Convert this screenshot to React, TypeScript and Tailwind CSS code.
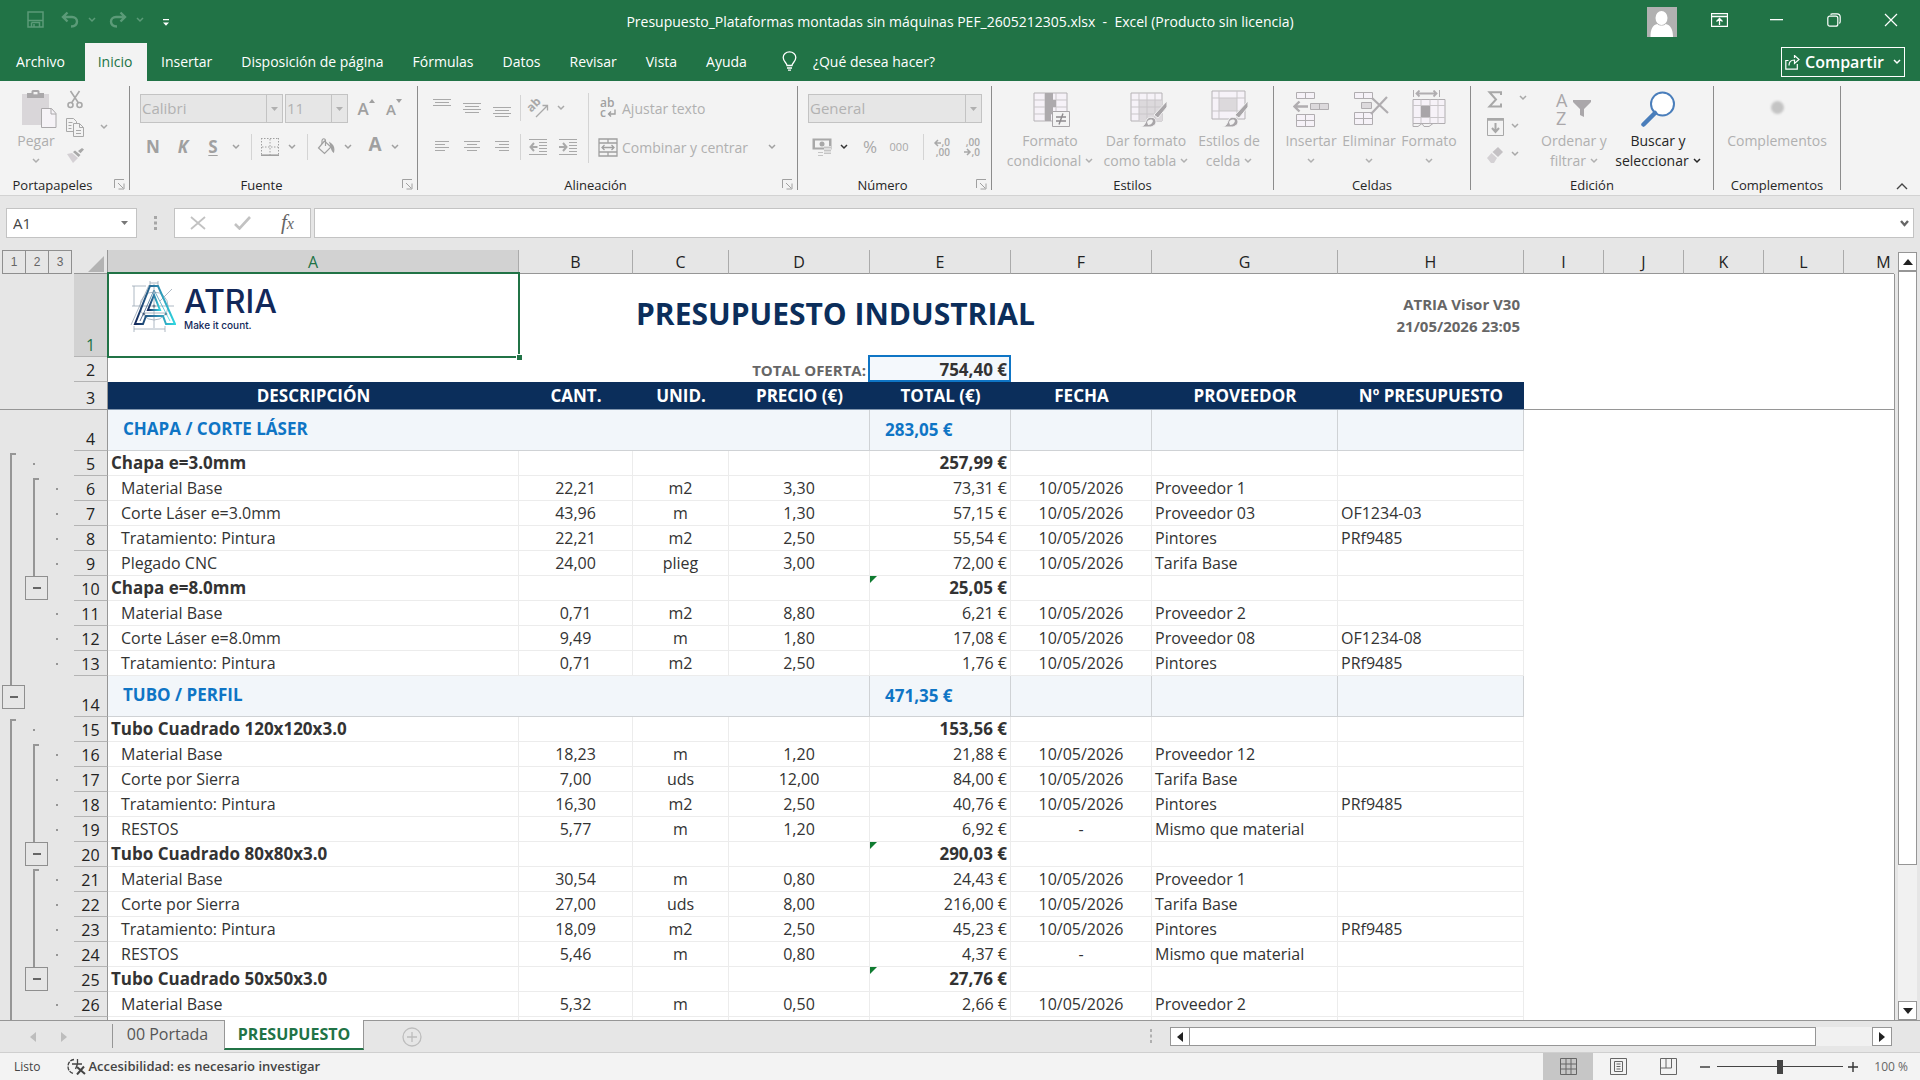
import React, { useState } from 'react';
import { clsx } from 'clsx';

type Kind = 'section' | 'group' | 'item';

interface SheetRow {
  kind: Kind;
  // one letter per outline level: s = start, l = line, d = dot, b = button, - = nothing
  outline: string;
  cells: string[];
  warn?: boolean;
}

const COLUMNS = [
  { id: 'A', width: 'w-[411px]' },
  { id: 'B', width: 'w-[114px]' },
  { id: 'C', width: 'w-[96px]' },
  { id: 'D', width: 'w-[141px]' },
  { id: 'E', width: 'w-[141px]' },
  { id: 'F', width: 'w-[141px]' },
  { id: 'G', width: 'w-[186px]' },
  { id: 'H', width: 'w-[186px]' },
  { id: 'I', width: 'w-[80px]' },
  { id: 'J', width: 'w-[80px]' },
  { id: 'K', width: 'w-[80px]' },
  { id: 'L', width: 'w-[80px]' },
  { id: 'M', width: 'w-[80px]' },
];

const HEADINGS = ['DESCRIPCIÓN', 'CANT.', 'UNID.', 'PRECIO (€)', 'TOTAL (€)', 'FECHA', 'PROVEEDOR', 'Nº PRESUPUESTO'];

const DATE = '10/05/2026';

const ROWS: SheetRow[] = [
  { kind: 'section', outline: '---', cells: ['CHAPA / CORTE LÁSER', '283,05 €'] },
  { kind: 'group', outline: 'sd-', cells: ['Chapa e=3.0mm', '257,99 €'] },
  { kind: 'item', outline: 'lsd', cells: ['Material Base', '22,21', 'm2', '3,30', '73,31 €', DATE, 'Proveedor 1', ''] },
  { kind: 'item', outline: 'lld', cells: ['Corte Láser e=3.0mm', '43,96', 'm', '1,30', '57,15 €', DATE, 'Proveedor 03', 'OF1234-03'] },
  { kind: 'item', outline: 'lld', cells: ['Tratamiento: Pintura', '22,21', 'm2', '2,50', '55,54 €', DATE, 'Pintores', 'PRf9485'] },
  { kind: 'item', outline: 'lld', cells: ['Plegado CNC', '24,00', 'plieg', '3,00', '72,00 €', DATE, 'Tarifa Base', ''] },
  { kind: 'group', outline: 'lb-', cells: ['Chapa e=8.0mm', '25,05 €'], warn: true },
  { kind: 'item', outline: 'l-d', cells: ['Material Base', '0,71', 'm2', '8,80', '6,21 €', DATE, 'Proveedor 2', ''] },
  { kind: 'item', outline: 'l-d', cells: ['Corte Láser e=8.0mm', '9,49', 'm', '1,80', '17,08 €', DATE, 'Proveedor 08', 'OF1234-08'] },
  { kind: 'item', outline: 'l-d', cells: ['Tratamiento: Pintura', '0,71', 'm2', '2,50', '1,76 €', DATE, 'Pintores', 'PRf9485'] },
  { kind: 'section', outline: 'b--', cells: ['TUBO / PERFIL', '471,35 €'] },
  { kind: 'group', outline: 'sd-', cells: ['Tubo Cuadrado 120x120x3.0', '153,56 €'] },
  { kind: 'item', outline: 'lsd', cells: ['Material Base', '18,23', 'm', '1,20', '21,88 €', DATE, 'Proveedor 12', ''] },
  { kind: 'item', outline: 'lld', cells: ['Corte por Sierra', '7,00', 'uds', '12,00', '84,00 €', DATE, 'Tarifa Base', ''] },
  { kind: 'item', outline: 'lld', cells: ['Tratamiento: Pintura', '16,30', 'm2', '2,50', '40,76 €', DATE, 'Pintores', 'PRf9485'] },
  { kind: 'item', outline: 'lld', cells: ['RESTOS', '5,77', 'm', '1,20', '6,92 €', '-', 'Mismo que material', ''] },
  { kind: 'group', outline: 'lb-', cells: ['Tubo Cuadrado 80x80x3.0', '290,03 €'], warn: true },
  { kind: 'item', outline: 'lsd', cells: ['Material Base', '30,54', 'm', '0,80', '24,43 €', DATE, 'Proveedor 1', ''] },
  { kind: 'item', outline: 'lld', cells: ['Corte por Sierra', '27,00', 'uds', '8,00', '216,00 €', DATE, 'Tarifa Base', ''] },
  { kind: 'item', outline: 'lld', cells: ['Tratamiento: Pintura', '18,09', 'm2', '2,50', '45,23 €', DATE, 'Pintores', 'PRf9485'] },
  { kind: 'item', outline: 'lld', cells: ['RESTOS', '5,46', 'm', '0,80', '4,37 €', '-', 'Mismo que material', ''] },
  { kind: 'group', outline: 'lb-', cells: ['Tubo Cuadrado 50x50x3.0', '27,76 €'], warn: true },
  { kind: 'item', outline: 'l-d', cells: ['Material Base', '5,32', 'm', '0,50', '2,66 €', DATE, 'Proveedor 2', ''] },
  { kind: 'item', outline: 'l--', cells: ['', '', '', '', '', '', '', ''] },
];

const TABS = ['Insertar', 'Disposición de página', 'Fórmulas', 'Datos', 'Revisar', 'Vista', 'Ayuda'];

/* ---------- small pieces ---------- */

const Caret = ({ className = '' }: { className?: string }) => (
  <svg viewBox="0 0 8 6" className={clsx('h-[6px] w-2 shrink-0', className)} fill="none" stroke="currentColor" strokeWidth="1.5">
    <path d="M1 1l3 3 3-3" />
  </svg>
);

const CaretButton = ({ label, className = '' }: { label: string; className?: string }) => (
  <button aria-label={label} className={clsx('flex h-6 w-4 shrink-0 items-center justify-center', className)}>
    <Caret />
  </button>
);

const IconButton = ({ label, className = 'w-[30px]', children }: { label: string; className?: string; children: React.ReactNode }) => (
  <button aria-label={label} className={clsx('flex h-[26px] shrink-0 items-center justify-center', className)}>
    {children}
  </button>
);

const Launcher = ({ label }: { label: string }) => (
  <button aria-label={label} className="mt-1 flex w-6 items-center justify-center pl-1 text-[#a0a0a0]">
    <svg viewBox="0 0 11 11" className="size-[11px]" fill="none" stroke="currentColor">
      <path d="M.5 9V.5H10M4 4l5 5M10 4.5V10H4.500" />
    </svg>
  </button>
);

interface GroupProps {
  title: string;
  width: string;
  launcher?: boolean;
  children: React.ReactNode;
}

const Group = ({ title, width, launcher, children }: GroupProps) => (
  <section className={clsx('flex shrink-0 flex-col border-r border-[#8c8c8c]', width)}>
    <div className="flex h-[88px]">{children}</div>
    <div className="flex h-4 text-[13px] leading-4 text-[#262626]">
      <span className="mt-[3px] flex-1 text-center">{title}</span>
      {launcher && <Launcher label={`Opciones de ${title}`} />}
    </div>
  </section>
);

interface BigButtonProps {
  icon: React.ReactNode;
  lines: string[];
  width: string;
  caret?: boolean;
  className?: string;
}

const BigButton = ({ icon, lines, width, caret = true, className = '' }: BigButtonProps) => (
  <button className={clsx('flex shrink-0 flex-col items-center text-[14px] leading-5 whitespace-nowrap', width, className)}>
    <span className="mb-[3px] flex h-[42px] items-center">{icon}</span>
    <span>{lines[0]}</span>
    <span className="flex h-5 items-center gap-1">
      {lines[1]}
      {caret && <Caret />}
    </span>
  </button>
);

const Combo = ({ label, value, className }: { label: string; value: string; className: string }) => (
  <div className={clsx('flex h-[29px] shrink-0 border border-[#c3c3c3] bg-[#e6e6e6]', className)}>
    <select aria-label={label} className="min-w-0 flex-1 appearance-none bg-transparent px-px text-[15px] text-[#b2b2b2]" defaultValue={value}>
      <option>{value}</option>
    </select>
    <span className="flex w-4 items-center justify-center border-l border-[#c3c3c3]">
      <svg viewBox="0 0 7 4" className="h-1 w-[7px]" fill="#b0b0b0"><path d="M0 0h7L3.500 4z" /></svg>
    </span>
  </div>
);

const Divider = ({ className = 'h-[26px]' }: { className?: string }) => <span className={clsx('w-px shrink-0 bg-[#d4d4d4]', className)} />;

// Horizontal strokes used by the alignment buttons: [x, y, width]
const Lines = ({ rows }: { rows: number[][] }) => (
  <svg viewBox="0 0 18 22" className="h-[22px] w-[18px]" fill="#a9a9a9">
    {rows.map(([x, y, w]) => <rect key={y} x={x} y={y} width={w} height="1" />)}
  </svg>
);

/* ---------- title bar ---------- */

const TitleBar = () => (
  <header className="flex h-[43px] shrink-0 items-center bg-[#217346] text-white">
    <div className="flex flex-1 items-center pb-1 text-[#5b9b78]">
      <IconButton label="Guardar" className="ml-[22px] w-[26px]">
        <svg viewBox="0 0 17 17" className="size-[17px]" fill="none" stroke="currentColor" strokeWidth="1.500">
          <path d="M1 1h15v15H1zM1 9.500h15" />
          <path d="M4.500 11.500h8V16M4.500 11.500V16M7 13v3" />
        </svg>
      </IconButton>
      <IconButton label="Deshacer" className="ml-2 w-7">
        <svg viewBox="0 0 18 17" className="h-[17px] w-[18px]" fill="none" stroke="currentColor" strokeWidth="2.400">
          <path d="M6.500 1.500L2 6l4.500 4.500M2.500 6H11c3 0 5 2 5 4.600C16 13.500 14 15.500 10 15.500" />
        </svg>
      </IconButton>
      <CaretButton label="Acciones para deshacer" />
      <IconButton label="Rehacer" className="ml-1 w-7">
        <svg viewBox="0 0 18 17" className="h-[17px] w-[18px]" fill="none" stroke="currentColor" strokeWidth="2.400">
          <path d="M11.500 1.500L16 6l-4.500 4.500M15.500 6H7c-3 0-5 2-5 4.600C2 13.500 4 15.500 8 15.500" />
        </svg>
      </IconButton>
      <CaretButton label="Acciones para rehacer" />
      <IconButton label="Personalizar barra de acceso rápido" className="ml-[10px] w-4 pt-1.5 text-white">
        <svg viewBox="0 0 6 7" className="h-[7px] w-1.5" fill="currentColor">
          <path d="M0 0h6v1.200H0zM0 3.500h6L3 6.800z" />
        </svg>
      </IconButton>
    </div>
    <h1 className="text-[14px] whitespace-pre">Presupuesto_Plataformas montadas sin máquinas PEF_2605212305.xlsx  -  Excel (Producto sin licencia)</h1>
    <div className="flex flex-1 items-center justify-end">
      <button aria-label="Cuenta" className="mr-[14px]">
        <svg viewBox="0 0 30 30" className="size-[30px]">
          <path d="M0 0h30v30H0z" fill="#b1b1b1" />
          <ellipse cx="14.500" cy="11" rx="6" ry="7" fill="#fff" />
          <path d="M3.500 30c0-8 2-12 7-13 1 2 7 2 8 0 5 1 7.500 5 7.500 13z" fill="#fff" />
        </svg>
      </button>
      <IconButton label="Opciones de presentación" className="w-[57px] pb-1">
        <svg viewBox="0 0 17 14" className="h-[14px] w-[17px]" fill="none" stroke="currentColor">
          <path d="M.5.5h16v13H.5zM.5 3.500h16M8.500 12V6M5.500 8.500l3-3 3 3" strokeWidth="1.300" />
        </svg>
      </IconButton>
      <IconButton label="Minimizar" className="w-[57px] pb-1">
        <svg viewBox="0 0 13 2" className="h-0.5 w-[13px]" fill="currentColor"><path d="M0 0h13v1.300H0z" /></svg>
      </IconButton>
      <IconButton label="Restaurar" className="w-[57px] pb-1">
        <svg viewBox="0 0 14 14" className="size-[14px]" fill="none" stroke="currentColor" strokeWidth="1.200">
          <rect x=".8" y="3.200" width="10" height="10" rx="2" />
          <path d="M3.500 1.500C4 1 4.500.8 5.500.8H10c2 0 3.200 1.200 3.200 3.200v4.500c0 1-.3 1.500-.8 2" />
        </svg>
      </IconButton>
      <IconButton label="Cerrar" className="w-[58px] pb-1">
        <svg viewBox="0 0 14 14" className="size-[14px]" fill="none" stroke="currentColor" strokeWidth="1.200"><path d="M1 1l12 12M13 1L1 13" /></svg>
      </IconButton>
    </div>
  </header>
);

const RibbonTabs = () => (
  <nav className="flex h-[38px] shrink-0 items-stretch bg-[#217346] text-[14px] text-white">
    <button className="w-[85px] pr-1 pb-0.5">Archivo</button>
    <button className="w-[62px] bg-[#f3f3f3] pr-0.5 pb-0.5 text-[#217346]">Inicio</button>
    <div className="flex gap-px">
      {TABS.map(tab => (
        <button key={tab} className="px-[14px] pb-0.5">{tab}</button>
      ))}
    </div>
    <button className="ml-[7px] flex items-center gap-4 px-[14px] pb-0.5">
      <svg viewBox="0 0 15 20" className="h-5 w-[15px]" fill="none" stroke="currentColor" strokeWidth="1.300">
        <path d="M5 14.500c0-2.500-3.800-4-3.800-8C1.200 3.200 4 .8 7.500.8s6.300 2.400 6.300 5.700c0 4-3.800 5.500-3.800 8zM5 17h5M6 19.200h3" />
      </svg>
      ¿Qué desea hacer?
    </button>
    <button className="mt-1 mr-[15px] mb-1 ml-auto flex h-[30px] w-[124px] items-center justify-center gap-[5px] border border-white text-[16px] font-semibold">
      <svg viewBox="0 0 15 15" className="size-[15px]" fill="none" stroke="currentColor" strokeWidth="1.200">
        <path d="M3.500 5.500H.8v8.700h11.500V9" />
        <path d="M4 10.500C4 6.500 6.500 5 9.500 5V8.500l4.500-4-4.500-4V3" />
      </svg>
      Compartir
      <Caret className="ml-1" />
    </button>
  </nav>
);

/* ---------- ribbon ---------- */

const Clipboard = () => (
  <Group title="Portapapeles" width="w-[130px]" launcher>
    <BigButton
      width="w-[66px] pl-1.5"
      className="text-[#aeaeae]"
      lines={['Pegar', '']}
      icon={
        <svg viewBox="0 0 36 38" className="mt-1 ml-1.5 h-[38px] w-9">
          <path d="M1 4h27v31H1z" fill="#d9d6d9" />
          <path d="M6 3h4.500V1.500A1.500 1.500 0 0112 0h5a1.500 1.500 0 011.500 1.500V3H23v5H6zM12.500 2v2.500h4V2z" fill="#aaa8aa" fillRule="evenodd" />
          <path d="M20.500 18.500h10l4.500 5v14H20.500z" fill="#f6f3f7" stroke="#aaa8aa" />
          <path d="M30 18.500V24h5" fill="none" stroke="#aaa8aa" />
        </svg>
      }
    />
    <div className="flex flex-col text-[#a8a8a8]">
      <IconButton label="Cortar" className="w-[18px]">
        <svg viewBox="0 0 16 19" className="h-[19px] w-4" fill="none" stroke="currentColor" strokeWidth="1.600">
          <circle cx="3.500" cy="15" r="2.500" />
          <circle cx="12.500" cy="15" r="2.500" />
          <path d="M4.500 13L12.500 1M11.500 13L3.500 1" />
        </svg>
      </IconButton>
      <IconButton label="Copiar" className="mt-0.5 w-[18px]">
        <svg viewBox="0 0 18 19" className="h-[19px] w-[18px]" fill="#f3f3f3" stroke="currentColor">
          <path d="M.5.5h7l3 3v10H.5z" />
          <path d="M7.500 5.500h6l4 4v9h-10zM13.500 5.500v4h4M2.500 4.500h4M2.500 7.500h3M2.500 10.500h3M10 12.500h5M10 15.500h5" />
        </svg>
      </IconButton>
      <IconButton label="Copiar formato" className="mt-0.5 w-[18px]">
        <svg viewBox="0 0 18 15" className="h-[15px] w-[18px]">
          <path d="M1 6l5-1 6 5-5 5z" fill="#d4d0d4" />
          <path d="M7 4l2-1.500L14.500 7 12.500 9zM12 3l4-3 2 1.500-3.500 3.800z" fill="currentColor" />
        </svg>
      </IconButton>
    </div>
    <CaretButton label="Opciones de copia" className="mt-[29px] ml-3 text-[#a8a8a8]" />
  </Group>
);

const FontGroup = () => (
  <Group title="Fuente" width="w-[288px]" launcher>
    <div className="flex flex-col gap-[11px] pt-2 pl-2">
      <div className="flex items-center pl-0.5 text-[#a0a0a0]">
        <Combo label="Fuente" value="Calibri" className="w-[143px]" />
        <Combo label="Tamaño de fuente" value="11" className="ml-0.5 w-[63px]" />
        <IconButton label="Aumentar tamaño" className="ml-1 w-7">
          <span className="text-[17px] font-semibold">A</span>
          <svg viewBox="0 0 6 4" className="mb-4 h-1 w-1.5" fill="currentColor"><path d="M0 4h6L3 0z" /></svg>
        </IconButton>
        <IconButton label="Disminuir tamaño" className="w-7">
          <span className="pt-0.5 text-[15px] font-semibold">A</span>
          <svg viewBox="0 0 6 4" className="mb-4 h-1 w-1.5" fill="currentColor"><path d="M0 0h6L3 4z" /></svg>
        </IconButton>
      </div>
      <div className="flex items-center text-[17px] font-bold text-[#a0a0a0]">
        <IconButton label="Negrita">N</IconButton>
        <IconButton label="Cursiva"><i>K</i></IconButton>
        <IconButton label="Subrayado"><u className="underline-offset-2">S</u></IconButton>
        <CaretButton label="Tipos de subrayado" />
        <Divider className="ml-[7px] h-[26px]" />
        <IconButton label="Bordes" className="ml-1 w-7">
          <svg viewBox="0 0 18 18" className="size-[18px]" fill="none" stroke="currentColor">
            <path d="M.5 0v17M17.500 0v17M0 .5h18M9 1v16M1 9h16" strokeDasharray="1.500 1.500" />
            <path d="M0 17.200h18" strokeWidth="1.600" />
          </svg>
        </IconButton>
        <CaretButton label="Tipos de borde" />
        <Divider className="ml-[7px] h-[26px]" />
        <IconButton label="Color de relleno" className="ml-1 w-7">
          <svg viewBox="0 0 18 18" className="size-[18px]" fill="none" stroke="currentColor" strokeWidth="1.200">
            <path d="M7.500 3L1.500 10l6 5.500 6.500-6.500z" />
            <path d="M5 6V3c0-3 3.500-3 3.500 0v5" />
            <path d="M13 5c3 2 4.500 5 3.500 9-1.500-1-2-3-2.500-6z" fill="currentColor" />
          </svg>
        </IconButton>
        <CaretButton label="Colores de relleno" />
        <IconButton label="Color de fuente" className="ml-[7px] w-6"><span className="mb-1.5 text-[19px]">A</span></IconButton>
        <CaretButton label="Colores de fuente" />
      </div>
    </div>
  </Group>
);

const AlignGroup = () => (
  <Group title="Alineación" width="w-[380px]" launcher>
    <div className="flex flex-col gap-[13px] pt-[9px] pr-[5px] pl-[9px] text-[#a9a9a9]">
      <div className="flex items-center">
        <IconButton label="Alinear arriba"><Lines rows={[[0, 2, 18], [2, 5, 14], [0, 8, 18]]} /></IconButton>
        <IconButton label="Alinear en medio"><Lines rows={[[0, 6, 18], [2, 9, 14], [0, 12, 18], [2, 15, 14]]} /></IconButton>
        <IconButton label="Alinear abajo"><Lines rows={[[0, 10, 18], [2, 13, 14], [0, 16, 18], [2, 19, 14]]} /></IconButton>
        <Divider className="mr-0.5 ml-[3px] h-[26px]" />
        <IconButton label="Orientación">
          <svg viewBox="0 0 20 20" className="size-5 overflow-visible" fill="none" stroke="currentColor" strokeWidth="1.300">
            <text x="7" y="10" textAnchor="middle" transform="rotate(-45 7 8)" fill="currentColor" stroke="none" className="text-[12px] font-bold">ab</text>
            <path d="M8 19L19 8M14.500 7.500h5v5" />
          </svg>
        </IconButton>
        <CaretButton label="Opciones de orientación" />
      </div>
      <div className="flex items-center">
        <IconButton label="Alinear a la izquierda"><Lines rows={[[2, 5, 14], [2, 8, 10], [2, 11, 14], [2, 14, 10]]} /></IconButton>
        <IconButton label="Centrar"><Lines rows={[[1, 5, 16], [4, 8, 10], [1, 11, 16], [4, 14, 10]]} /></IconButton>
        <IconButton label="Alinear a la derecha"><Lines rows={[[2, 5, 14], [6, 8, 10], [2, 11, 14], [6, 14, 10]]} /></IconButton>
        <Divider className="mr-0.5 ml-[3px] h-[26px]" />
        <IconButton label="Disminuir sangría">
          <svg viewBox="0 0 18 17" className="h-[17px] w-[18px]" fill="none" stroke="currentColor">
            <path d="M0 .5h18M10 3.500h8M10 6.500h8M10 9.500h8M10 12.500h8M0 15.500h18" />
            <path d="M5 4L1.500 8 5 12M2 8h6.500" strokeWidth="2" />
          </svg>
        </IconButton>
        <IconButton label="Aumentar sangría">
          <svg viewBox="0 0 18 17" className="h-[17px] w-[18px]" fill="none" stroke="currentColor">
            <path d="M0 .5h18M10 3.500h8M10 6.500h8M10 9.500h8M10 12.500h8M0 15.500h18" />
            <path d="M4 4l3.500 4L4 12M0 8h7" strokeWidth="2" />
          </svg>
        </IconButton>
      </div>
    </div>
    <Divider className="mt-[7px] h-[70px]" />
    <div className="flex flex-1 flex-col gap-[13px] pt-[9px] pl-[9px] text-[14px] text-[#b0b0b0]">
      <button className="flex h-[26px] items-center gap-1">
        <svg viewBox="0 0 20 20" className="size-5 overflow-visible" fill="#a0a0a0">
          <text x="2" y="9" className="text-[12px] font-semibold">ab</text>
          <text x="2" y="19" className="text-[12px] font-semibold">c</text>
          <path d="M17 11.500V16h-6M13 13.500L10.500 16l2.500 2.500" fill="none" stroke="#a0a0a0" strokeWidth="1.400" />
        </svg>
        Ajustar texto
      </button>
      <div className="flex items-center">
        <button className="flex h-[26px] items-center gap-1">
          <svg viewBox="0 0 20 19" className="h-[19px] w-5" fill="none" stroke="#a0a0a0" strokeWidth="1.300">
            <path d="M1 1h18v17H1zM1 5h18M1 14h18M10 1v4M10 14v4M4 9.500h12M6.500 7L4 9.500 6.500 12M13.500 7L16 9.500 13.500 12" />
          </svg>
          Combinar y centrar
        </button>
        <CaretButton label="Opciones de combinar" className="mr-[17px] ml-auto text-[#a0a0a0]" />
      </div>
    </div>
  </Group>
);

const NumberGroup = () => (
  <Group title="Número" width="w-[194px]" launcher>
    <div className="flex flex-col gap-[11px] pt-2 pl-2.5 text-[#a8a8a8]">
      <Combo label="Formato de número" value="General" className="w-[174px]" />
      <div className="flex items-center">
        <IconButton label="Formato de moneda" className="w-7">
          <svg viewBox="0 0 20 20" className="size-5">
            <path d="M.5 1.500h19v11H.5zM3 3.500v7h14v-7z" fill="currentColor" fillRule="evenodd" />
            <circle cx="10" cy="7" r="2.500" fill="currentColor" />
            <path d="M12 9h7v8h-7z" fill="#dedede" />
            <path d="M12 10.500h7M12 13.500h7M12 16.500h7M6 15.500h5M6 18.500h5" stroke="#c4c4c4" strokeWidth="1.200" />
          </svg>
        </IconButton>
        <CaretButton label="Monedas" className="text-[#333]" />
        <IconButton label="Porcentaje" className="ml-1 w-7"><span className="text-[17px]">%</span></IconButton>
        <IconButton label="Millares" className="w-[30px]"><span className="text-[11px]">000</span></IconButton>
        <Divider className="ml-[9px] h-[26px]" />
        <IconButton label="Aumentar decimales" className="ml-[3px] w-[30px]">
          <svg viewBox="0 0 18 20" className="h-5 w-[18px] overflow-visible" fill="currentColor">
            <text x="17" y="9" textAnchor="end" className="text-[10px] font-semibold">,0</text>
            <text x="17" y="19" textAnchor="end" className="text-[10px] font-semibold">,00</text>
            <path d="M8 6H2M5 3L2 6l3 3" fill="none" stroke="currentColor" strokeWidth="1.500" />
          </svg>
        </IconButton>
        <IconButton label="Disminuir decimales">
          <svg viewBox="0 0 18 20" className="h-5 w-[18px] overflow-visible" fill="currentColor">
            <text x="17" y="9" textAnchor="end" className="text-[10px] font-semibold">,00</text>
            <text x="17" y="19" textAnchor="end" className="text-[10px] font-semibold">,0</text>
            <path d="M1 15h6M4 12l3 3-3 3" fill="none" stroke="currentColor" strokeWidth="1.500" />
          </svg>
        </IconButton>
      </div>
    </div>
  </Group>
);

const StylesGroup = () => (
  <Group title="Estilos" width="w-[282px]">
    <div className="flex pl-2.5 text-[#b0b0b0]">
      <BigButton
        width="w-24"
        lines={['Formato', 'condicional']}
        icon={
          <svg viewBox="0 0 38 36" className="mt-1.5 ml-1 h-9 w-[38px]">
            <path d="M1 1h33v28H1z" fill="#f6f2f8" stroke="#b5b2b5" />
            <path d="M12 1v28M23 1v28M1 8h33M1 15h33M1 22h33" stroke="#c9c6c9" />
            <path d="M12 1h8v7h-8zM12 8h11v7H12zM12 15h8v7h-8zM12 22h6v7h-6z" fill="#adaaad" />
            <path d="M19.500 19.500h17v15h-17z" fill="#f3f3f3" stroke="#a8a5a8" />
            <path d="M23 25h10M23 29h10M30 21.500l-4 11" stroke="#8e8b8e" strokeWidth="1.400" />
          </svg>
        }
      />
      <BigButton
        width="w-24"
        lines={['Dar formato', 'como tabla']}
        icon={
          <svg viewBox="0 0 38 36" className="mt-1.5 ml-1.5 h-9 w-[38px]">
            <path d="M1 1h31v28H1z" fill="#f6f2f8" stroke="#b5b2b5" />
            <path d="M9 8h23v21H9z" fill="#dcd9dc" />
            <path d="M9 1v28M17 1v28M25 1v28M1 8h31M1 15h31M1 22h31" stroke="#c9c6c9" />
            <path d="M37 9v6L28 26l-4-3z" fill="#a8a5a8" stroke="#f3f3f3" />
            <path d="M10 35c5-1 5-4 7-8 3-3 8-2 9 2 0 4-3 6-7 6z" fill="#a8a5a8" stroke="#f3f3f3" />
            <path d="M17 30c2-3 5-3 6-1-1 3-3 4-5 4z" fill="#f3f3f3" />
          </svg>
        }
      />
      <BigButton
        width="w-[70px]"
        lines={['Estilos de', 'celda']}
        icon={
          <svg viewBox="0 0 38 38" className="mt-1 ml-0.5 h-[38px] w-[38px]">
            <path d="M1 1h33v28H1z" fill="#f6f2f8" stroke="#b5b2b5" />
            <path d="M8 8h18v13H8z" fill="#dcd9dc" />
            <path d="M8 1v28M26 1v28M1 8h33M1 21h33" stroke="#c9c6c9" />
            <path d="M37 11v6L28 28l-4-3z" fill="#a8a5a8" stroke="#f3f3f3" />
            <path d="M11 37c5-1 5-4 7-8 3-3 8-2 9 2 0 4-3 6-7 6z" fill="#a8a5a8" stroke="#f3f3f3" />
            <path d="M18 32c2-3 5-3 6-1-1 3-3 4-5 4z" fill="#f3f3f3" />
          </svg>
        }
      />
    </div>
  </Group>
);

const CellsGroup = () => (
  <Group title="Celdas" width="w-[197px]">
    <div className="flex pl-2 text-[#b0b0b0]">
      <BigButton
        width="w-[58px]"
        lines={['Insertar', '']}
        icon={
          <svg viewBox="0 0 36 36" className="mt-1 h-9 w-9" fill="#f6f2f8" stroke="#b0adb0">
            <path d="M3.500 1.500h18v6h-18zM12.500 1.500v6M3.500 23.500h18v12h-18zM12.500 23.500v12M3.500 29.500h18" />
            <path d="M17.500 12.500h18v6h-18zM26.500 12.500v6" fill="#dcd9dc" />
            <path d="M15 15.500H2M6.500 10.500L1.500 15.500l5 5" fill="none" strokeWidth="2.400" />
          </svg>
        }
      />
      <BigButton
        width="w-[58px]"
        lines={['Eliminar', '']}
        icon={
          <svg viewBox="0 0 36 36" className="mt-1 ml-1 h-9 w-9" fill="#f6f2f8" stroke="#b0adb0">
            <path d="M1.500 1.500h18v6h-18zM10.500 1.500v6M1.500 21.500h18v12h-18zM10.500 21.500v12M1.500 27.500h18" />
            <path d="M8.500 11.500h10v6h-10z" fill="#dcd9dc" />
            <path d="M19 7l16 15M34 6L18 23" fill="none" strokeWidth="2.200" />
          </svg>
        }
      />
      <BigButton
        width="w-[62px]"
        lines={['Formato', '']}
        icon={
          <svg viewBox="0 0 36 38" className="mt-1 h-[38px] w-9" fill="none" stroke="#b0adb0">
            <path d="M2 9.500h32v24H2z" fill="#f6f2f8" />
            <path d="M10 9.500v24M19 9.500v24M27 9.500v24M2 15.500h32M2 27.500h32" stroke="#c9c6c9" />
            <path d="M10 16h9v11h-9z" fill="#a8a5a8" stroke="none" />
            <path d="M2.500 0v7M28.500 0v7M2 33.500v3h5l4-3 2 3h5l4-3" />
            <path d="M5 3.500h21M8.500.5l-3 3 3 3M22.500.5l3 3-3 3" strokeWidth="1.800" />
          </svg>
        }
      />
    </div>
  </Group>
);

const EditGroup = () => (
  <Group title="Edición" width="w-[243px]">
    <div className="flex flex-col pl-3 text-[#a8a8a8]">
      <div className="flex">
        <IconButton label="Autosuma" className="w-6">
          <svg viewBox="0 0 16 17" className="h-[17px] w-4" fill="none" stroke="currentColor" strokeWidth="2">
            <path d="M14 4V1.200H2.500L9 8.500l-6.500 7H14V12.500" />
          </svg>
        </IconButton>
        <CaretButton label="Más funciones" className="ml-2" />
      </div>
      <div className="mt-0.5 flex">
        <IconButton label="Rellenar" className="w-6">
          <svg viewBox="0 0 17 18" className="h-[18px] w-[17px]" fill="none" stroke="currentColor">
            <path d="M.5.5h16v17H.5z" />
            <path d="M0 1.500h17" strokeWidth="2.500" />
            <path d="M8.500 5v8M5 10l3.500 4 3.500-4" strokeWidth="2" />
          </svg>
        </IconButton>
        <CaretButton label="Opciones de relleno" />
      </div>
      <div className="mt-0.5 flex">
        <IconButton label="Borrar" className="w-6">
          <svg viewBox="0 0 17 16" className="h-4 w-[17px]"><path d="M11 0l5 5-5 5-5.500-5z" fill="#c4c1c4" /><path d="M4.500 6l5.500 5-3 5H4L0 11z" fill="#d4d1d4" /></svg>
        </IconButton>
        <CaretButton label="Opciones de borrado" />
      </div>
    </div>
    <BigButton
      width="ml-[5px] w-[76px]"
      className="text-[#b0b0b0]"
      lines={['Ordenar y', 'filtrar']}
      icon={
        <svg viewBox="0 0 36 34" className="mt-1 h-[34px] w-9 overflow-visible" fill="#aaa7aa">
          <text x="0" y="15" className="text-[18px]">A</text>
          <text x="0" y="33" className="text-[18px]">Z</text>
          <path d="M17 8h18v2l-7 7v8l-4-2v-6l-7-7z" />
        </svg>
      }
    />
    <BigButton
      width="w-[92px]"
      className="text-[#262626]"
      lines={['Buscar y', 'seleccionar']}
      icon={
        <svg viewBox="0 0 36 36" className="mt-1 h-9 w-9" fill="none" stroke="#4a7ebb">
          <circle cx="22.500" cy="13" r="11.500" strokeWidth="2" fill="#fff" />
          <path d="M15 22L3.500 33.500" strokeWidth="4.500" strokeLinecap="round" />
        </svg>
      }
    />
  </Group>
);

const Ribbon = () => (
  <div className="flex h-[115px] shrink-0 border-b border-[#d2d2d2] bg-[#f3f3f3] py-[5px]">
    <Clipboard />
    <FontGroup />
    <AlignGroup />
    <NumberGroup />
    <StylesGroup />
    <CellsGroup />
    <EditGroup />
    <Group title="Complementos" width="w-[127px]">
      <BigButton
        width="w-full"
        className="text-[#b0b0b0]"
        caret={false}
        lines={['Complementos', '']}
        icon={<span className="size-[13px] rounded-full bg-[#c4c4c4] blur-[1px]" />}
      />
    </Group>
    <button aria-label="Contraer la cinta" className="mt-auto mr-3 ml-auto text-[#444]">
      <svg viewBox="0 0 12 8" className="h-2 w-3" fill="none" stroke="currentColor" strokeWidth="1.400"><path d="M1 7l5-5 5 5" /></svg>
    </button>
  </div>
);

/* ---------- formula bar ---------- */

const FormulaBar = () => (
  <div className="flex h-[54px] shrink-0 items-start pt-3 pr-1.5 pl-1.5">
    <div className="flex h-[30px] w-[131px] items-center border border-[#c3c3c3] bg-white pr-2">
      <input aria-label="Cuadro de nombres" defaultValue="A1" className="min-w-0 flex-1 bg-transparent pl-1.5 text-[15px] text-[#444]" />
      <svg viewBox="0 0 7 4" className="h-1 w-[7px]" fill="#777"><path d="M0 0h7L3.500 4z" /></svg>
    </div>
    <svg viewBox="0 0 3 14" className="mx-[17px] mt-2 h-[14px] w-[3px]" fill="#a6a6a6"><path d="M0 0h3v3H0zM0 5.500h3v3H0zM0 11h3v3H0z" /></svg>
    <div className="flex h-[30px] w-[137px] items-center justify-around border border-[#c3c3c3] bg-white">
      <IconButton label="Cancelar">
        <svg viewBox="0 0 16 14" className="h-[14px] w-4" fill="none" stroke="#c2c2c2" strokeWidth="1.800"><path d="M1 1l14 12M15 1L1 13" /></svg>
      </IconButton>
      <IconButton label="Introducir">
        <svg viewBox="0 0 17 14" className="h-[14px] w-[17px]" fill="none" stroke="#c2c2c2" strokeWidth="2.600"><path d="M1 8l4.500 4.500L16 1" /></svg>
      </IconButton>
      <IconButton label="Insertar función">
        <span className="font-['Liberation_Serif',serif] text-[21px] leading-6 text-[#666] italic">f<span className="text-[16px]">x</span></span>
      </IconButton>
    </div>
    <div className="ml-[3px] flex h-[30px] flex-1 items-center border border-[#c3c3c3] bg-white pr-1">
      <input aria-label="Barra de fórmulas" className="min-w-0 flex-1 bg-transparent px-2 text-[15px]" />
      <button aria-label="Expandir barra de fórmulas" className="text-[#666]">
        <svg viewBox="0 0 9 7" className="h-[7px] w-[9px]" fill="none" stroke="currentColor" strokeWidth="2.400"><path d="M1 1l3.500 4L8 1" /></svg>
      </button>
    </div>
  </div>
);

/* ---------- outline gutter ---------- */

const MinusButton = () => (
  <button aria-label="Contraer grupo" className="flex h-6 w-[23px] shrink-0 items-center justify-center border border-[#8f8f8f] bg-[#e6e6e6]">
    <span className="h-0.5 w-2 bg-[#666]" />
  </button>
);

const OutlineCell = ({ mark }: { mark: string }) => (
  <div className="flex h-full w-[23px] flex-col">
    {mark === 's' && <span className="mt-0.5 ml-2 w-1.5 flex-1 border-t-2 border-l-2 border-[#969696]" />}
    {mark === 'l' && <span className="ml-2 w-0.5 flex-1 bg-[#969696]" />}
    {mark === 'd' && <span className="my-auto ml-2 size-0.5 bg-[#969696]" />}
    {mark === 'b' && (
      <>
        <span className="ml-2 w-0.5 flex-1 bg-[#969696]" />
        <MinusButton />
        <span className="min-h-px flex-1" />
      </>
    )}
  </div>
);

const OutlineGutter = () => (
  <div className="flex w-[74px] shrink-0 flex-col overflow-hidden">
    <div className="flex h-6 shrink-0 pl-0.5 text-[#666]">
      {['1', '2', '3'].map(level => (
        <button key={level} className="-mr-px w-6 border border-[#8f8f8f] font-['Liberation_Sans',sans-serif] text-[12px]">{level}</button>
      ))}
    </div>
    <div className="h-[136px] shrink-0 border-b border-[#969696]" />
    {ROWS.map((row, i) => (
      <div key={i} className={clsx('flex shrink-0 pl-0.5', row.kind === 'section' ? 'h-[41px]' : 'h-[25px]')}>
        {row.outline.split('').map((mark, level) => <OutlineCell key={level} mark={mark} />)}
      </div>
    ))}
  </div>
);

/* ---------- sheet ---------- */

const Logo = () => (
  <div className="flex pt-[7px] pl-[22px]">
    <svg viewBox="0 0 46 52" className="h-[52px] w-[46px]" fill="none">
      <defs>
        <linearGradient id="mark" x1="0" y1="0" x2="1" y2="0">
          <stop offset="0" stopColor="#14285a" />
          <stop offset=".5" stopColor="#2f7ea6" />
          <stop offset="1" stopColor="#2fd6e0" />
        </linearGradient>
      </defs>
      <g stroke="#9aa7b5" strokeWidth=".8">
        <circle cx="24" cy="25" r="14" />
        <path d="M4 5v20M2 5h14M2 25h42M24 3v44M4 48h31M4 45v6M35 45v6M1 44L19 4M20 2h8M20 0v4M28 0v4M14 32h22M30 20l12-12" />
      </g>
      <g fill="#6f7f92">
        <circle cx="24" cy="25" r="1.500" />
        <circle cx="14" cy="33" r="1.300" />
        <circle cx="36" cy="33" r="1.300" />
      </g>
      <g stroke="url(#mark)" strokeWidth="2">
        <path d="M20 5h8l17 38h-9l-3-8H16l-3 8H5z" />
        <path d="M24 14l-6 15h12z" />
      </g>
      <path d="M24 9l-7 16-7 15M24 9l16 31" stroke="url(#mark)" strokeWidth=".7" />
    </svg>
    <div className="ml-2 flex flex-col pt-1 font-['Inter',sans-serif] text-[#12285a]">
      <span className="text-[32px] leading-[34px] font-medium">ATRIA</span>
      <span className="text-[10px] leading-3 font-medium">Make it count.</span>
    </div>
  </div>
);

const RowNumber = ({ n, active, frozen }: { n: number; active?: boolean; frozen?: boolean }) => (
  <th
    scope="row"
    className={clsx(
      'border-r border-b border-r-[#969696] p-0 pt-0.5 text-center align-bottom text-[16px] leading-[22px] font-normal',
      frozen ? 'border-b-[#969696]' : 'border-b-[#b4b4b4]',
      active ? 'bg-[#d2d2d2] text-[#217346]' : 'bg-[#e6e6e6] text-[#222]',
    )}
  >
    {n}
  </th>
);

const SectionRow = ({ row }: { row: SheetRow }) => (
  <>
    <td colSpan={4} className="border-r border-b border-[#cfd2d5] bg-[#f2f6fa] px-[15px] pt-0 pb-0.5 text-[17px] font-bold text-[#0f75c5]">{row.cells[0]}</td>
    <td className="border-r border-b border-[#cfd2d5] bg-[#f2f6fa] px-[15px] py-0 text-[17px] font-bold text-[#0f75c5]">{row.cells[1]}</td>
    {[0, 1, 2].map(i => <td key={i} className="border-r border-b border-[#cfd2d5] bg-[#f2f6fa]" />)}
  </>
);

const CELL = 'border-r border-b border-[#ececec] px-[3px] py-0';

const GroupRow = ({ row }: { row: SheetRow }) => (
  <>
    <td className={clsx(CELL, 'text-[17px] font-bold')}>{row.cells[0]}</td>
    {[0, 1, 2].map(i => <td key={i} className={CELL} />)}
    <td className={clsx(CELL, 'relative text-right text-[17px] font-bold')}>
      {row.warn && (
        <svg viewBox="0 0 7 7" className="absolute top-0 left-0 size-[7px]" fill="#0f7b30"><path d="M0 0h7L0 7z" /></svg>
      )}
      {row.cells[1]}
    </td>
    {[0, 1, 2].map(i => <td key={i} className={CELL} />)}
  </>
);

const ALIGN = ['pl-[13px]', 'text-center', 'text-center', 'text-center', 'text-right', 'text-center', '', ''];

const ItemRow = ({ row }: { row: SheetRow }) => (
  <>
    {row.cells.map((cell, i) => (
      <td key={i} className={clsx(CELL, ALIGN[i])}>{cell}</td>
    ))}
  </>
);

const Sheet = () => (
  <div className="min-w-0 flex-1 overflow-hidden">
    <table className="w-[1850px] table-fixed border-separate border-spacing-0 text-[16px] leading-6 text-[#333]">
      <colgroup>
        <col className="w-[34px]" />
        {COLUMNS.map(col => <col key={col.id} className={col.width} />)}
      </colgroup>
      <thead>
        <tr className="h-6">
          <th className="border-r border-b border-[#969696] p-0" aria-label="Seleccionar todo">
            <svg viewBox="0 0 16 16" className="mt-1 ml-[14px] size-4" fill="#b3b3b3"><path d="M16 0v16H0z" /></svg>
          </th>
          {COLUMNS.map(col => (
            <th
              key={col.id}
              scope="col"
              className={clsx(
                'border-r border-b border-r-[#ababab] border-b-[#969696] p-0 leading-[22px] font-normal',
                col.id === 'A' ? 'bg-[#d2d2d2] text-[#217346]' : 'text-[#222]',
              )}
            >
              {col.id}
            </th>
          ))}
        </tr>
      </thead>
      <tbody className="bg-white">
        <tr className="h-[83px]">
          <RowNumber n={1} active />
          <td className="relative p-0 align-top">
            <Logo />
            <span className="absolute -inset-x-px -top-0.5 -bottom-px border-2 border-[#217346]" />
            <span className="absolute -right-1 -bottom-1 size-[7px] border border-white bg-[#217346]" />
          </td>
          <td colSpan={5} className="p-0 pb-1 text-center text-[30px] font-bold text-[#0b2e5b]">PRESUPUESTO INDUSTRIAL</td>
          <td />
          <td className="p-0 pr-1 pb-0.5 text-right text-[15px] leading-[22px] font-bold text-[#666]">
            ATRIA Visor V30<br />21/05/2026 23:05
          </td>
          <td colSpan={5} />
        </tr>
        <tr className="h-[25px]">
          <RowNumber n={2} />
          <td colSpan={4} className="p-0 pr-1 text-right text-[15px] font-bold text-[#666]">TOTAL OFERTA:</td>
          <td className="relative bg-[#f4f8fc] p-0 pr-1 text-right text-[17px] font-bold">
            754,40 €
            <span className="absolute -top-0.5 right-0 bottom-0 -left-0.5 border-2 border-[#0f75c5]" />
          </td>
          <td colSpan={8} />
        </tr>
        <tr className="h-7">
          <RowNumber n={3} frozen />
          {HEADINGS.map(text => (
            <th key={text} scope="col" className="border-b border-[#8195ad] bg-[#0b2e5b] p-0 text-[17px] font-bold text-white">{text}</th>
          ))}
          <td colSpan={5} className="border-b border-[#969696]" />
        </tr>
        {ROWS.map((row, i) => (
          <tr key={i} className={row.kind === 'section' ? 'h-[41px]' : 'h-[25px]'}>
            <RowNumber n={i + 4} />
            {row.kind === 'section' && <SectionRow row={row} />}
            {row.kind === 'group' && <GroupRow row={row} />}
            {row.kind === 'item' && <ItemRow row={row} />}
            <td colSpan={5} />
          </tr>
        ))}
      </tbody>
    </table>
  </div>
);

const ScrollArrow = ({ label, d, className }: { label: string; d: string; className: string }) => (
  <button aria-label={label} className={clsx('flex shrink-0 items-center justify-center border border-[#969696] bg-white', className)}>
    <svg viewBox="0 0 10 10" className="size-2.5" fill="#222"><path d={d} /></svg>
  </button>
);

const VerticalScroll = () => (
  <div className="flex w-[19px] shrink-0 flex-col bg-[#f1f1f1]">
    <ScrollArrow label="Subir" d="M0 8h10L5 2z" className="h-[19px]" />
    <div className="h-[594px] border border-[#969696] bg-white" />
    <ScrollArrow label="Bajar" d="M0 2h10L5 8z" className="mt-auto h-[19px]" />
  </div>
);

/* ---------- bottom bars ---------- */

const SheetTabs = () => (
  <div className="flex h-8 shrink-0 items-start border-t border-[#969696] text-[16px]">
    <div className="flex h-full w-[112px] items-center gap-[25px] pl-[30px] text-[#bdbdbd]">
      <button aria-label="Hoja anterior"><svg viewBox="0 0 6 10" className="h-2.5 w-1.5" fill="currentColor"><path d="M6 0v10L0 5z" /></svg></button>
      <button aria-label="Hoja siguiente"><svg viewBox="0 0 6 10" className="h-2.5 w-1.5" fill="currentColor"><path d="M0 0v10l6-5z" /></svg></button>
    </div>
    <button className="mt-[3px] h-6 w-28 border-l border-[#969696] pr-0.5 pb-1 leading-5 text-[#555]">00 Portada</button>
    <button className="-mt-px h-[30px] w-[140px] border-x border-b-2 border-x-[#969696] border-b-[#217346] bg-white font-bold text-[#217346]">PRESUPUESTO</button>
    <button aria-label="Hoja nueva" className="mt-1.5 ml-[38px] text-[#bdbdbd]">
      <svg viewBox="0 0 20 20" className="size-5" fill="none" stroke="currentColor" strokeWidth="1.300"><circle cx="10" cy="10" r="9" /><path d="M10 5v10M5 10h10" /></svg>
    </button>
    <svg viewBox="0 0 2 14" className="mt-2 mr-[18px] ml-auto h-[14px] w-0.5" fill="#b0b0b0"><path d="M0 0h2v3H0zM0 5.500h2v3H0zM0 11h2v3H0z" /></svg>
    <div className="mt-1.5 mr-7 flex h-[19px] w-[722px] bg-[#f1f1f1]">
      <ScrollArrow label="Desplazar a la izquierda" d="M8 0v10L2 5z" className="w-5" />
      <div className="-ml-px w-[627px] border border-[#969696] bg-white" />
      <ScrollArrow label="Desplazar a la derecha" d="M2 0v10l6-5z" className="ml-auto w-5" />
    </div>
  </div>
);

const StatusBar = () => {
  const [zoom, setZoom] = useState(100);

  return (
    <footer className="flex h-7 shrink-0 items-center border-t border-[#cfcfcf] bg-[#f3f3f3] text-[12px] text-[#444]">
      <span className="pl-[14px]">Listo</span>
      <button className="ml-[26px] flex items-center gap-[3px] text-[13px] font-semibold">
        <svg viewBox="0 0 19 17" className="h-[17px] w-[19px]" fill="none" stroke="currentColor" strokeWidth="1.300">
          <path d="M7 1.500C3 2 1 5 1 8.500S3 14.500 6.500 15.500" strokeDasharray="4 1" />
          <path d="M5 6h10M10.500 1v5l-2 5" />
          <path d="M10 9l8 7M17 8.500L10 16.500" strokeWidth="2" />
        </svg>
        Accesibilidad: es necesario investigar
      </button>
      <div className="ml-auto flex h-full items-center text-[#666]">
        <IconButton label="Normal" className="h-full w-[50px] bg-[#c6c6c6]">
          <svg viewBox="0 0 17 17" className="size-[17px]" fill="none" stroke="currentColor"><path d="M.5.5h16v16H.5zM6 .5v16M11 .5v16M.5 6h16M.5 11h16" /></svg>
        </IconButton>
        <IconButton label="Diseño de página" className="w-[50px]">
          <svg viewBox="0 0 17 17" className="size-[17px]" fill="none" stroke="currentColor"><path d="M.5.5h16v16H.5zM4.500 3.500h8v10h-8zM6.500 6h4M6.500 8.500h4M6.500 11h4" /></svg>
        </IconButton>
        <IconButton label="Vista previa de salto de página" className="w-[50px]">
          <svg viewBox="0 0 17 17" className="size-[17px]" fill="none" stroke="currentColor"><path d="M.5 16.500V.5h16v16zM6 .5v9.500M11.500.5v9.500M.5 10h11" /></svg>
        </IconButton>
        <IconButton label="Alejar" className="w-6 text-[#333]">
          <svg viewBox="0 0 10 10" className="size-2.5" stroke="currentColor" strokeWidth="1.400"><path d="M0 5h10" /></svg>
        </IconButton>
        <input
          type="range"
          aria-label="Zoom"
          min={10}
          max={190}
          value={zoom}
          onChange={e => setZoom(Number(e.target.value))}
          className="h-[14px] w-[126px] appearance-none bg-[linear-gradient(#444,#444)] bg-[length:100%_1px] bg-center bg-no-repeat [&::-webkit-slider-thumb]:h-[14px] [&::-webkit-slider-thumb]:w-1.5 [&::-webkit-slider-thumb]:appearance-none [&::-webkit-slider-thumb]:bg-[#444]"
        />
        <IconButton label="Acercar" className="w-5 text-[#333]">
          <svg viewBox="0 0 10 10" className="size-2.5" stroke="currentColor" strokeWidth="1.400"><path d="M0 5h10M5 0v10" /></svg>
        </IconButton>
        <span className="w-[57px] pr-3 text-right">{zoom} %</span>
      </div>
    </footer>
  );
};

export default function App() {
  return (
    <div className="flex h-screen flex-col overflow-hidden bg-[#e6e6e6] font-['Open_Sans','Noto_Sans',sans-serif]">
      <TitleBar />
      <RibbonTabs />
      <Ribbon />
      <FormulaBar />
      <main className="flex min-h-0 flex-1">
        <OutlineGutter />
        <Sheet />
        <div className="mt-6 w-px bg-[#969696]" />
        <div className="flex pt-0.5 pr-[3px] pl-[3px]">
          <VerticalScroll />
        </div>
      </main>
      <SheetTabs />
      <StatusBar />
    </div>
  );
}
